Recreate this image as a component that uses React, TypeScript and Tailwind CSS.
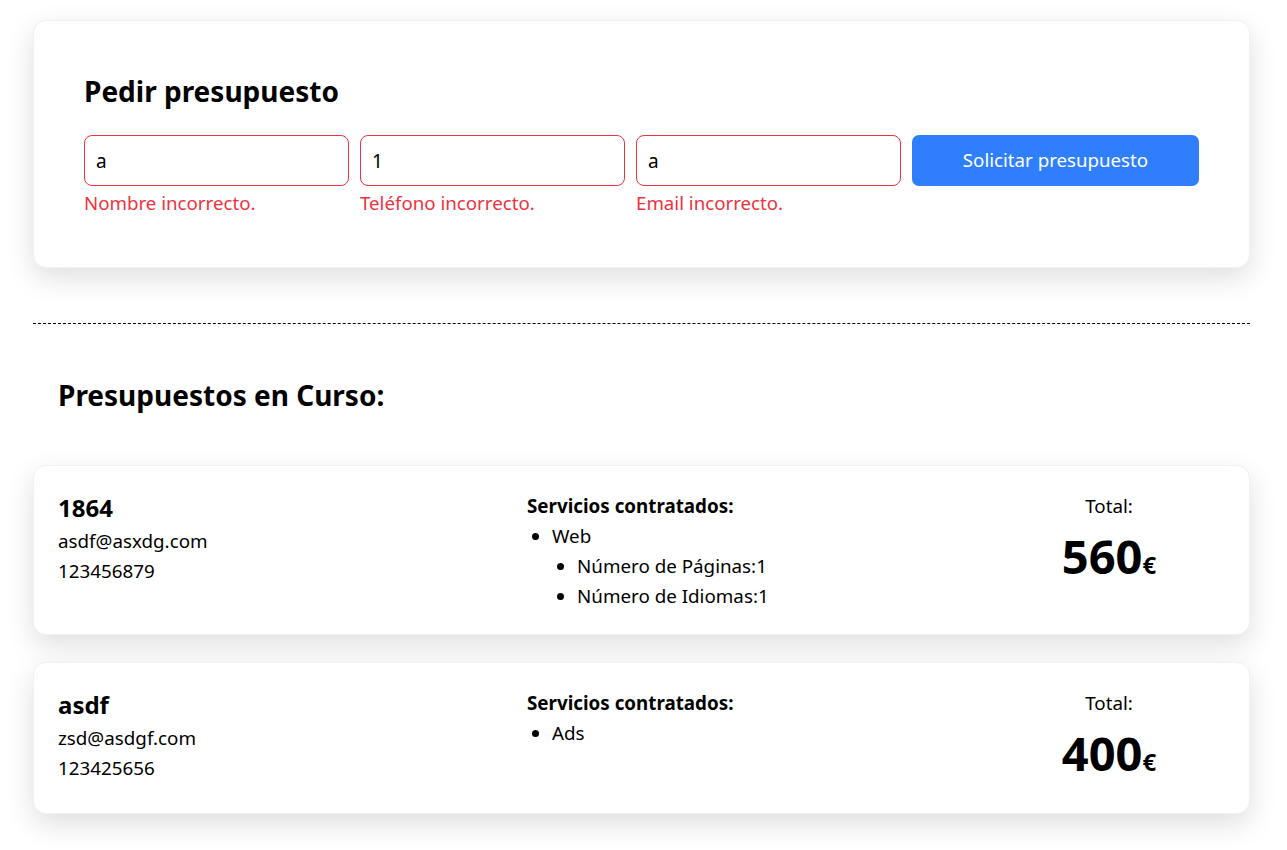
import React from "react";

type Service = { name: string; details?: string[] };

type Quote = {
  name: string;
  email: string;
  phone: string;
  services: Service[];
  total: number;
};

const QUOTES: Quote[] = [
  {
    name: "1864",
    email: "asdf@asxdg.com",
    phone: "123456879",
    services: [{ name: "Web", details: ["Número de Páginas:1", "Número de Idiomas:1"] }],
    total: 560,
  },
  {
    name: "asdf",
    email: "zsd@asdgf.com",
    phone: "123425656",
    services: [{ name: "Ads" }],
    total: 400,
  },
];

const FIELDS = [
  { value: "a", error: "Nombre incorrecto." },
  { value: "1", error: "Teléfono incorrecto." },
  { value: "a", error: "Email incorrecto." },
];

function QuoteForm() {
  return (
    <div className="rounded-[13px] border border-[#f1f1f1] bg-white px-[50px] pb-[51px] pt-[52px] shadow-[0_10px_28px_rgba(0,0,0,0.13)]">
      <h4 className="mb-[26px] text-[28px] font-bold leading-[36px]">Pedir presupuesto</h4>
      <div className="grid grid-cols-[265px_265px_265px_1fr] gap-x-[11px]">
        {FIELDS.map((f, i) => (
          <div key={i}>
            <input
              defaultValue={f.value}
              className="h-[51px] w-full rounded-[8px] border border-[#f0313e] bg-white px-[11px] text-[19px] text-black outline-none"
            />
            <p className="mt-[4px] text-[18.7px] leading-[26px] text-[#f0313e]">{f.error}</p>
          </div>
        ))}
        <div>
          <button
            type="button"
            className="h-[51px] w-full rounded-[7px] bg-[#2f7ffc] text-[18.7px] text-white"
          >
            Solicitar presupuesto
          </button>
        </div>
      </div>
    </div>
  );
}

function QuoteCard({ q }: { q: Quote }) {
  return (
    <div className="grid grid-cols-[469px_466px_1fr] rounded-[13px] border border-[#f1f1f1] bg-white px-[24px] pb-[23px] pt-[25px] shadow-[0_10px_28px_rgba(0,0,0,0.13)]">
      <div className="pt-[2px]">
        <h5 className="mb-[3px] text-[24px] font-bold leading-[30px]">{q.name}</h5>
        <p className="leading-[30px]">{q.email}</p>
        <p className="leading-[30px]">{q.phone}</p>
      </div>
      <div>
        <p className="font-bold leading-[30px]">Servicios contratados:</p>
        <ul className="list-disc pl-[25px]">
          {q.services.map((s) => (
            <li key={s.name} className="leading-[30px]">
              {s.name}
              {s.details && (
                <ul className="list-disc pl-[25px]">
                  {s.details.map((d) => (
                    <li key={d}>{d}</li>
                  ))}
                </ul>
              )}
            </li>
          ))}
        </ul>
      </div>
      <div className="text-center">
        <p className="leading-[30px]">Total:</p>
        <p className="mb-[7px] mt-[5px] text-[47px] font-bold leading-[60px]">
          {q.total}
          <span className="text-[24px] leading-none">€</span>
        </p>
      </div>
    </div>
  );
}

export default function App() {
  return (
    <div className="min-h-[850px] bg-white pl-[33px] pr-[37px] pt-[20px] text-[18.8px] text-black [font-family:'Noto_Sans',sans-serif]">
      <QuoteForm />
      <div className="mt-[55px] border-t border-dashed border-black" />
      <h4 className="mb-[52px] mt-[53px] pl-[25px] text-[28px] font-bold leading-[36px]">
        Presupuestos en Curso:
      </h4>
      <div className="flex flex-col gap-[27px]">
        {QUOTES.map((q) => (
          <QuoteCard key={q.name} q={q} />
        ))}
      </div>
    </div>
  );
}
